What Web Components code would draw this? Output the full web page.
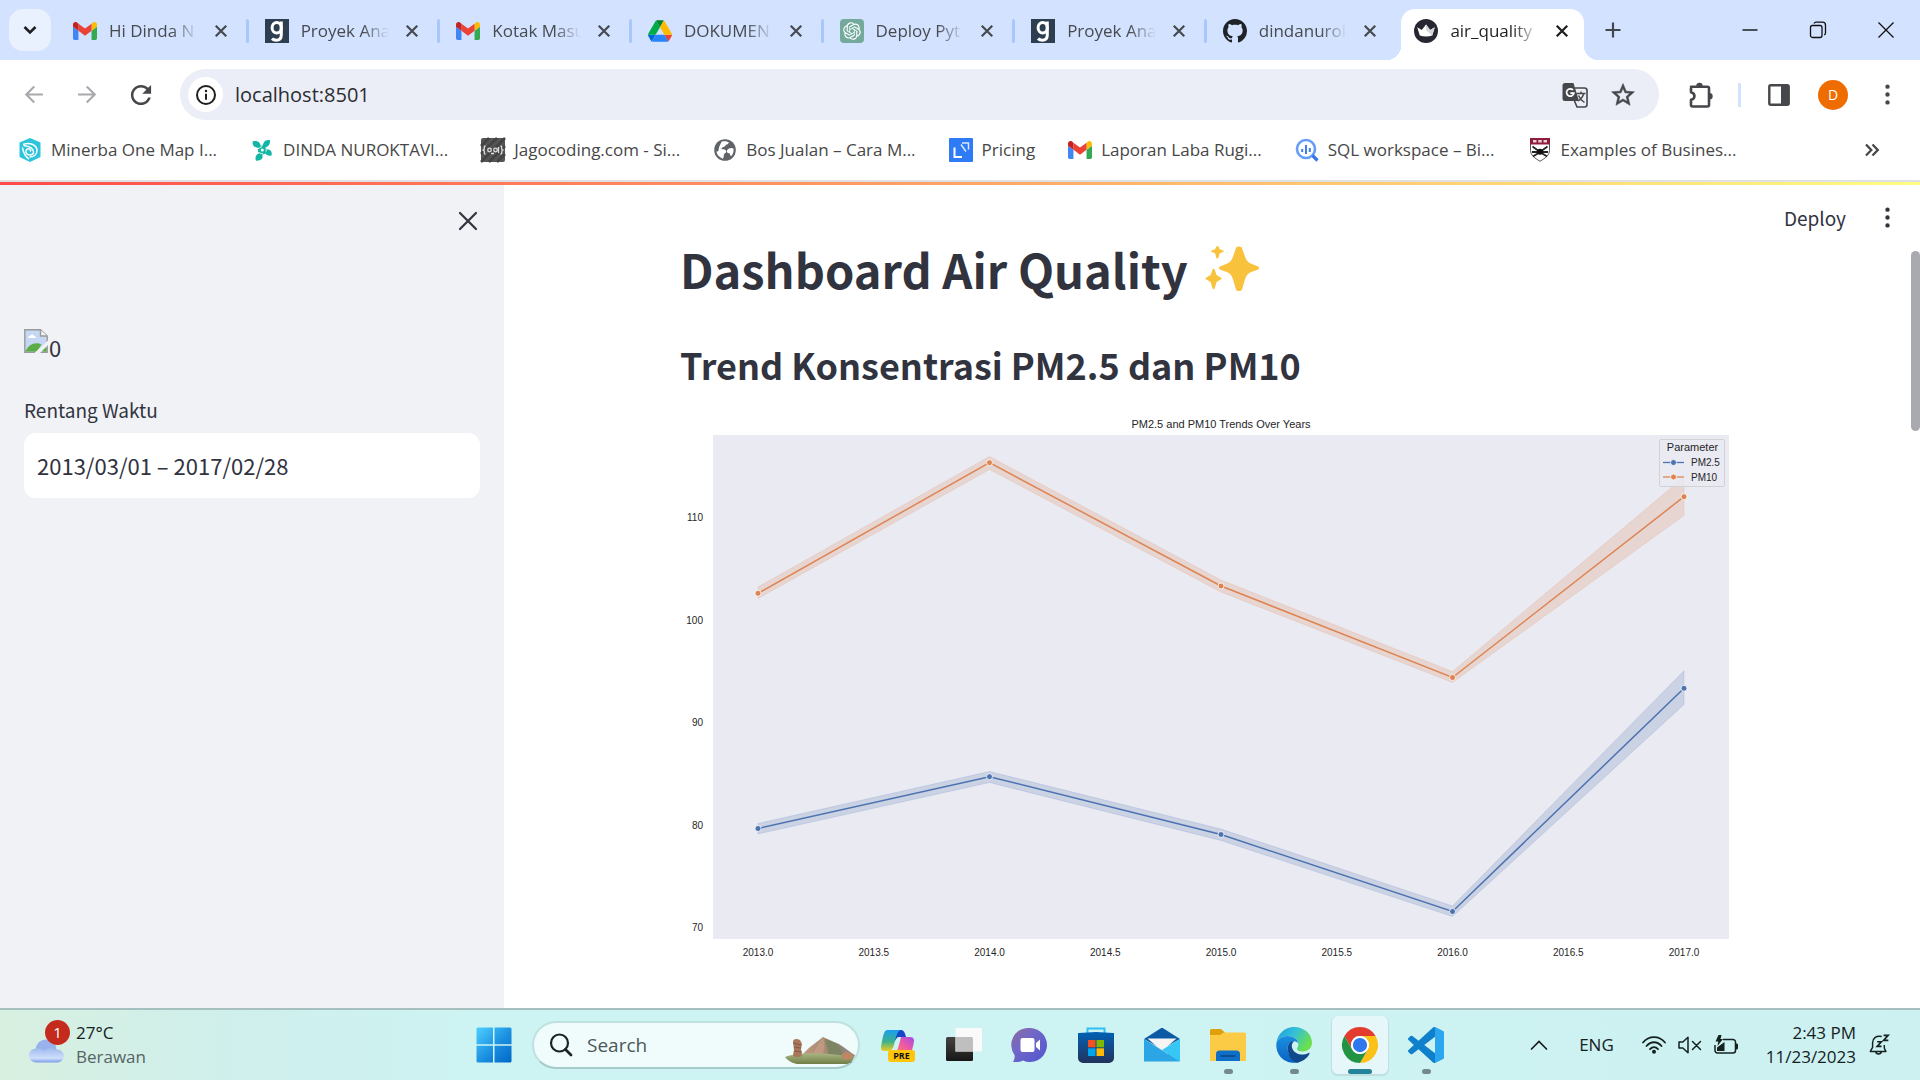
<!DOCTYPE html>
<html lang="en">
<head>
<meta charset="utf-8">
<title>air_quality</title>
<style>
  html, body { height: 100%; margin: 0; }
  body {
    --ui: "Open Sans", "Noto Sans", sans-serif;
    --app: "Noto Sans CJK SC", "Noto Sans", sans-serif;
    --ink: #31333f;
    font-family: var(--ui);
    display: flex; flex-direction: column; overflow: hidden; background: #fff;
  }
</style>
</head>
<body>
<tab-strip>
  <browser-tab icon="gmail">Hi Dinda N</browser-tab>
  <browser-tab icon="dicoding">Proyek Ana</browser-tab>
  <browser-tab icon="gmail">Kotak Masu</browser-tab>
  <browser-tab icon="drive">DOKUMEN</browser-tab>
  <browser-tab icon="openai">Deploy Pyt</browser-tab>
  <browser-tab icon="dicoding">Proyek Ana</browser-tab>
  <browser-tab icon="github" plain>dindanurol</browser-tab>
  <browser-tab icon="crown" active>air_quality</browser-tab>
</tab-strip>
<browser-toolbar></browser-toolbar>
<bookmark-bar>
  <bookmark-link icon="minerba">Minerba One Map I...</bookmark-link>
  <bookmark-link icon="pinwheel">DINDA NUROKTAVI...</bookmark-link>
  <bookmark-link icon="jago">Jagocoding.com - Si...</bookmark-link>
  <bookmark-link icon="globe">Bos Jualan – Cara M...</bookmark-link>
  <bookmark-link icon="pricing">Pricing</bookmark-link>
  <bookmark-link icon="gmail">Laporan Laba Rugi...</bookmark-link>
  <bookmark-link icon="bigquery">SQL workspace – Bi...</bookmark-link>
  <bookmark-link icon="shield">Examples of Busines...</bookmark-link>
</bookmark-bar>
<dashboard-app></dashboard-app>
<task-bar></task-bar>

<script>
const ICONS = {
  gmail: ['52 36 88 78', '<path fill="#4285f4" d="M58 108h14V74L52 59v43c0 3.32 2.69 6 6 6"/><path fill="#34a853" d="M120 108h14c3.32 0 6-2.69 6-6V59l-20 15"/><path fill="#fbbc04" d="M120 48v26l20-15v-8c0-7.42-8.47-11.65-14.4-7.2"/><path fill="#ea4335" d="M72 74V48l24 18 24-18v26L96 92"/><path fill="#c5221f" d="M52 51v8l20 15V48l-5.6-4.2c-5.94-4.45-14.4-.22-14.4 7.2"/>'],
  dicoding: ['0 0 24 24', '<path fill="#2d3e50" d="M0 0h24v24H0z"/><g fill="none" stroke="#fff" stroke-width="3"><ellipse cx="11.700" cy="8.800" rx="4.600" ry="5.300"/><path d="M16.300 2.500v13.500c0 3.600-1.900 5.200-5 5.200-1.700 0-3.200-.5-4.300-1.600"/></g>'],
  drive: ['0 -3 87.3 84', '<path d="m6.6 66.85 3.85 6.65c.8 1.4 1.95 2.5 3.3 3.3l13.75-23.8h-27.5c0 1.55.4 3.1 1.2 4.5z" fill="#0066da"/><path d="m43.65 25-13.75-23.8c-1.35.8-2.5 1.9-3.3 3.3l-25.4 44a9.06 9.06 0 0 0-1.2 4.500h27.500z" fill="#00ac47"/><path d="m73.55 76.8c1.35-.8 2.5-1.9 3.3-3.3l1.6-2.75 7.65-13.25c.8-1.4 1.2-2.95 1.2-4.5h-27.502l5.852 11.5z" fill="#ea4335"/><path d="m43.65 25 13.75-23.8c-1.35-.8-2.9-1.2-4.5-1.2h-18.5c-1.6 0-3.15.45-4.5 1.2z" fill="#00832d"/><path d="m59.8 53h-32.300l-13.750 23.800c1.350.8 2.900 1.200 4.500 1.200h50.800c1.600 0 3.150-.45 4.500-1.200z" fill="#2684fc"/><path d="m73.4 26.500-12.700-22c-.8-1.400-1.950-2.500-3.300-3.300l-13.750 23.800 16.150 28h27.450c0-1.550-.4-3.100-1.200-4.500z" fill="#ffba00"/>'],
  openai: ['0 0 36 36', '<rect width="36" height="36" rx="6" fill="#74aa9c"/><g transform="translate(4.800 4.800) scale(1.100)"><path fill="#fff" d="M22.2819 9.8211a5.9847 5.9847 0 0 0-.5157-4.9108 6.0462 6.0462 0 0 0-6.5098-2.9A6.0651 6.0651 0 0 0 4.9807 4.1818a5.9847 5.9847 0 0 0-3.9977 2.9 6.0462 6.0462 0 0 0 .7427 7.0966 5.98 5.98 0 0 0 .511 4.9107 6.051 6.051 0 0 0 6.5146 2.9001A5.9847 5.9847 0 0 0 13.2599 24a6.0557 6.0557 0 0 0 5.7718-4.2058 5.9894 5.9894 0 0 0 3.9977-2.9001 6.0557 6.0557 0 0 0-.7475-7.0729zm-9.022 12.6081a4.4755 4.4755 0 0 1-2.8764-1.0408l.1419-.0804 4.7783-2.7582a.7948.7948 0 0 0 .3927-.6813v-6.7369l2.02 1.1686a.071.071 0 0 1 .038.052v5.5826a4.504 4.504 0 0 1-4.4945 4.4944zm-9.6607-4.1254a4.4708 4.4708 0 0 1-.5346-3.0137l.142.0852 4.783 2.7582a.7712.7712 0 0 0 .7806 0l5.8428-3.3685v2.3324a.0804.0804 0 0 1-.0332.0615L9.74 19.9502a4.4992 4.4992 0 0 1-6.1408-1.6464zM2.3408 7.8956a4.485 4.485 0 0 1 2.3655-1.9728V11.6a.7664.7664 0 0 0 .3879.6765l5.8144 3.3543-2.0201 1.1685a.0757.0757 0 0 1-.071 0l-4.8303-2.7865A4.504 4.504 0 0 1 2.3408 7.872zm16.5963 3.8558L13.1038 8.364 15.1192 7.2a.0757.0757 0 0 1 .071 0l4.8303 2.7913a4.4944 4.4944 0 0 1-.6765 8.1042v-5.6772a.79.79 0 0 0-.407-.667zm2.0107-3.0231l-.142-.0852-4.7735-2.7818a.7759.7759 0 0 0-.7854 0L9.409 9.2297V6.8974a.0662.0662 0 0 1 .0284-.0615l4.8303-2.7866a4.4992 4.4992 0 0 1 6.6802 4.66zM8.3065 12.863l-2.02-1.1638a.0804.0804 0 0 1-.038-.0567V6.0742a4.4992 4.4992 0 0 1 7.3757-3.4537l-.142.0805L8.704 5.459a.7948.7948 0 0 0-.3927.6813zm1.0976-2.3654l2.602-1.4998 2.6069 1.4998v2.9994l-2.5974 1.4997-2.6067-1.4997Z"/></g>'],
  github: ['0 0 16 16', '<path fill="#1f2328" d="M8 0C3.58 0 0 3.58 0 8c0 3.54 2.29 6.53 5.47 7.59.4.07.55-.17.55-.38 0-.19-.01-.82-.01-1.49-2.01.37-2.53-.49-2.69-.94-.09-.23-.48-.94-.82-1.13-.28-.15-.68-.52-.01-.53.63-.01 1.08.58 1.23.82.72 1.21 1.87.87 2.33.66.07-.52.28-.87.51-1.07-1.78-.2-3.64-.89-3.64-3.95 0-.87.31-1.59.82-2.15-.08-.2-.36-1.02.08-2.12 0 0 .67-.21 2.2.82.64-.18 1.32-.27 2-.27s1.36.09 2 .27c1.53-1.04 2.2-.82 2.2-.82.44 1.1.16 1.92.08 2.12.51.56.82 1.27.82 2.15 0 3.07-1.87 3.75-3.65 3.95.29.25.54.73.54 1.48 0 1.07-.01 1.93-.01 2.2 0 .21.15.46.55.38A8.01 8.01 0 0 0 16 8c0-4.42-3.58-8-8-8z"/>'],
  crown: ['0 0 24 24', '<circle cx="12" cy="12" r="12" fill="#262730"/><path fill="#fff" d="M3.200 8.200l4.600 2.800L12 5.500l4.200 5.500 4.600-2.800-2.600 8.200c-3.800 1.300-8.600 1.300-12.400 0z"/><path fill="#d5d6da" d="M12 5.500l4.200 5.500 4.600-2.800-2.600 8.200L12 11z"/>'],
  close: ['0 0 24 24', '<path d="M5 5l14 14M19 5L5 19" stroke="currentColor" stroke-width="3" fill="none"/>'],
  thinClose: ['0 0 24 24', '<path d="M4 4l16 16M20 4L4 20" stroke="currentColor" stroke-width="2.200" stroke-linecap="round" fill="none"/>'],
  winClose: ['0 0 18 18', '<path d="M1.500 1.500l15 15M16.500 1.500l-15 15" stroke="#111" stroke-width="1.300" fill="none"/>'],
  winMin: ['0 0 18 18', '<path d="M1.500 9h15" stroke="#111" stroke-width="1.400"/>'],
  winMax: ['0 0 18 18', '<rect x="1.500" y="4.500" width="11.500" height="12" rx="2" fill="none" stroke="#111" stroke-width="1.300"/><path d="M5 2.500C5.500 1.500 6 1.200 7 1.200h6.500a3 3 0 0 1 3 3V12c0 1-.4 1.600-1.300 2" fill="none" stroke="#111" stroke-width="1.300"/>'],
  plus: ['0 0 18 18', '<path d="M9 1.500v15M1.500 9h15" stroke="#41474d" stroke-width="2.200"/>'],
  chevronDown: ['0 0 16 16', '<path d="M2.500 5l5.500 5.500L13.500 5" fill="none" stroke="#1f1f1f" stroke-width="2.600"/>'],
  chevronUp: ['0 0 18 18', '<path d="M1.500 13L9 5.500l7.500 7.500" fill="none" stroke="#1b1b1b" stroke-width="1.700" stroke-linecap="round"/>'],
  back: ['2 2 20 20', '<path fill="#a8a9ac" d="M21 11H7.500l5.900-5.900L12 3.700 3.700 12l8.300 8.300 1.400-1.400L7.500 13H21z"/>'],
  forward: ['2 2 20 20', '<path fill="#a8a9ac" d="M3 11h13.500l-5.900-5.900L12 3.700l8.300 8.300-8.300 8.300-1.400-1.400 5.900-5.900H3z"/>'],
  reload: ['2.500 2.500 19 19', '<path fill="#45474a" d="M17.65 6.35C16.2 4.900 14.210 4 12 4c-4.420 0-7.990 3.580-7.990 8s3.570 8 7.990 8c3.730 0 6.840-2.550 7.730-6h-2.080c-.82 2.330-3.040 4-5.650 4-3.310 0-6-2.690-6-6s2.690-6 6-6c1.660 0 3.140.69 4.220 1.780L13 11h7V4l-2.350 2.350z"/>'],
  info: ['0 0 22 22', '<circle cx="11" cy="11" r="9" fill="none" stroke="#1f1f1f" stroke-width="2"/><path d="M11 9.800v6" stroke="#1f1f1f" stroke-width="2"/><circle cx="11" cy="6.900" r="1.250" fill="#1f1f1f"/>'],
  translate: ['0 0 26 26', '<path fill="#45474a" d="M3 1h8.500l5.500 18H3a2.500 2.500 0 0 1-2.500-2.500v-13A2.500 2.500 0 0 1 3 1z"/><path d="M13 6h9.500A2.500 2.500 0 0 1 25 8.500v14a2.500 2.500 0 0 1-2.500 2.500h-7.500l-2.500-6" fill="none" stroke="#45474a" stroke-width="1.600"/><path d="M11 8a3.700 3.700 0 1 0 .9 3.200H8.300" fill="none" stroke="#fff" stroke-width="1.700"/><path d="M14.500 11.500h9M19 9.500v2M21.800 11.500c-.8 3.200-3.300 6-6 7.500M16.500 13.500c1 2.500 3.500 5.500 6 7" fill="none" stroke="#45474a" stroke-width="1.400"/>'],
  star: ['1.500 1.500 21 21', '<path fill="#45474a" stroke="#45474a" stroke-width=".5" d="M22 9.240l-7.190-.62L12 2 9.190 8.630 2 9.240l5.460 4.730L5.820 21 12 17.270 18.180 21l-1.630-7.030L22 9.240zM12 15.400l-3.760 2.270 1-4.280-3.320-2.880 4.380-.38L12 6.100l1.710 4.040 4.380.38-3.320 2.880 1 4.280L12 15.400z"/>'],
  extension: ['0 0 26 26', '<path d="M4 4.800h16.500a1.500 1.500 0 0 1 1.500 1.500V23a1.500 1.500 0 0 1-1.500 1.500h-15A1.500 1.500 0 0 1 4 23v-5.200c4.600-.9 4.600-6.600 0-7.600V6.300A1.500 1.500 0 0 1 5.500 4.800z" fill="none" stroke="#45474a" stroke-width="2.600" stroke-linejoin="round"/><path fill="#45474a" d="M9.300 4a3.200 3.200 0 0 1 6.400 0zM22.500 11a3.200 3.200 0 0 1 0 6.400z"/>'],
  panel: ['0 0 22 22', '<rect x="1.300" y="1.300" width="19.400" height="19.400" rx="1.500" fill="none" stroke="#45474a" stroke-width="2.400"/><path fill="#45474a" d="M13 1h8v20h-8z"/>'],
  kebab: ['0 0 24 24', '<g fill="currentColor"><circle cx="12" cy="3" r="2.500"/><circle cx="12" cy="12" r="2.500"/><circle cx="12" cy="21" r="2.500"/></g>'],
  more: ['0 0 16 16', '<path d="M2 2.500L7.300 8 2 13.500M8.500 2.500L13.800 8l-5.300 5.500" fill="none" stroke="#45474a" stroke-width="2.300"/>'],
  minerba: ['0 0 24 24', '<path fill="#2cc5dc" d="M12 0l10.500 4.500v14.500L12 24 1.500 19V4.500z"/><g fill="none" stroke="#fff" stroke-width="1.500"><path d="M5 6.500c7-2.500 14 .5 14 6 0 4-3 6.500-7.500 6.500"/><path d="M4.500 9.500C5 15 8.500 19.500 11 21"/><path d="M5.500 7.500c7 1 10 3.500 10 6.500 0 2-2 3-4 3-3 0-4.800-3-3-5.300 2-2.200 5 0 3.800 2"/></g>'],
  pinwheel: ['0 0 24 24', '<g fill="#12b5a6"><path d="M10.500 10C4 10.500 1.500 6 3 3.200 8 2 11.500 5 10.500 10z"/><path d="M13 9.800C12 4 16 1 20 2.200c.5 4.500-2.500 7.500-7 7.600z"/><path d="M15 12c5-1.500 7.500 1.500 6.500 5.500-4 .8-7-1-6.500-5.500z"/><path d="M11 15c3.500 3.500 1.500 8-5 7.800-1.500-4 .5-7.500 5-7.800z"/><circle cx="12.300" cy="12" r="4.500"/></g><circle cx="12.300" cy="12" r="1.500" fill="#fff"/><path d="M8 10.500c1.500.2 1.900-1.500 4-1.900M16 9.500c-.2 1.500.6 2.500 0 4M8.600 14c1 1.500 2.500 1.500 4.200 1.600" stroke="#fff" stroke-width="1" fill="none"/>'],
  jago: ['0 0 24 24', '<rect width="24" height="24" rx="2" fill="#555"/><path d="M0 8L8 0M0 16L16 0M0 24L24 0M8 24L24 8M16 24l8-8" stroke="#444" stroke-width="2.500"/><g fill="none" stroke="#ddd" stroke-width="1.300"><path d="M4.500 8C3 8 3.300 9.500 3.300 10.800S2.500 12 1.500 12c1 0 1.800 0 1.800 1.200S3 16 4.500 16M19.500 8c1.500 0 1.200 1.500 1.200 2.800s.8 1.200 1.800 1.200c-1 0-1.800 0-1.800 1.200s.3 2.800-1.200 2.800"/><circle cx="8.500" cy="12" r="1.800"/><circle cx="14.500" cy="12" r="1.800"/><path d="M10 15.500h3M17.500 9v6"/></g>'],
  globe: ['0 0 24 24', '<circle cx="12" cy="12" r="10.800" fill="#5f6368"/><path fill="#fff" d="M8.500 3.800c2.500-.8 5.500-.5 7.500.7-1 1.300-1.700 2.300-3.200 2.300-.3 2-2 2-3.300 2.500-.3 1.200-1.300 1.700-2 1.700 3 .3 5.500.2 5.800 2.500.2 1.300-1.800 1.700-2.300 2.800-.4 1.500-.2 3.500-1 4.500C6.500 19.500 4 17 3.400 13.500c1.600.3 2.100-.8 2.300-2.300C6 9 7 7 8.500 3.800zM16 10.500c1.500-.8 3-.8 4.500 0 .5 3-.5 6-2.500 7.800-1-.8-.8-2-1.500-3-2 .2-2.800-1-2.500-2.500.2-1 1-1.800 2-2.300z"/>'],
  pricing: ['0 0 24 24', '<rect width="24" height="24" rx="1" fill="#2f7bf6"/><path d="M5.500 9.500v9.500h7.500" fill="none" stroke="#fff" stroke-width="2"/><path d="M13 5h6.500v6.500M12 6.500l5 7" fill="none" stroke="#dbe8ff" stroke-width="1.500"/>'],
  bigquery: ['0 0 24 24', '<circle cx="11" cy="11" r="9" fill="#fff" stroke="#669df6" stroke-width="2.600"/><path d="M17.500 17.500l5 5" stroke="#3a76e8" stroke-width="3.200"/><path d="M7.200 11v3M11 7v9M14.800 10v4" stroke="#3f7de8" stroke-width="2"/>'],
  shield: ['0 0 24 24', '<path d="M2.500.8h19v11.500c0 5-4.500 8-9.500 11-5-3-9.500-6-9.500-11z" fill="#fff" stroke="#555" stroke-width="1"/><path fill="#8c1d3c" d="M2 0h20v6.500H2z"/><path d="M5 3.200h3.500M10.300 3.200h3.500M15.500 3.200H19" stroke="#e8ccd3" stroke-width="2.400"/><path d="M4.500 8.500L12 14l7.500-5.500M5 18.500l7-4.500 7 4.500M4 14h16" fill="none" stroke="#222" stroke-width="1.800"/><circle cx="12" cy="13.800" r="3" fill="#111"/>'],
  broken: ['0 0 24 24', '<path d="M.8.800h15.700L23.200 7v16.200H.8z" fill="#c5d7f3" stroke="#9a9a9a" stroke-width="1.400"/><path d="M16.500.8V7h6.700" fill="#f2f2f2" stroke="#9a9a9a" stroke-width="1.400"/><path d="M4 9c0-1.500 1.300-2 2-2 .5-2 3.500-2 4 0 1.500 0 2 1 2 2z" fill="#fff"/><path d="M1.500 22.500c3-7.500 10-10 16-7L13 22.500z" fill="#5aac44"/><path d="M18 22.500c1-2.500 2.500-4 4.500-4.500v4.500z" fill="#5aac44"/><path d="M10.500 24L24 11.500V16l-8 8z" fill="#f0f2f6"/>'],
  sparkles: ['0 0 54 46', '<g fill="#f9c23c"><path d="M31 2c.8-2 5.200-2 6 0l3.300 9.500c1 3 3 5.200 6 6.300l6.200 2.400c2 .8 2 2.800 0 3.500l-6.200 2.400c-3 1.200-5 3.300-6 6.300L37 43.500c-.8 2-5.200 2-6 0l-3.300-11.100c-1-3-3-5.100-6-6.300l-6.200-2.400c-2-.7-2-2.700 0-3.500l6.200-2.400c3-1.100 5-3.300 6-6.300z"/><path d="M11.400.6c.4-.8 1.600-.8 2 0l1.300 2.700 3.300 1.200c1 .4 1 1.200 0 1.600L14.700 7.300 13.400 12c-.4.800-1.600.8-2 0l-1.300-4.700L6.800 6.100c-1-.4-1-1.200 0-1.600l3.300-1.200z"/><path d="M7.600 23.500c.4-1 1.600-1 2 0l2 5.500 4.400 2.700c.9.600.9 1.200 0 1.600L11.600 36l-2 6.500c-.4 1-1.600 1-2 0l-2-6.500L1 33.300c-.9-.4-.9-1 0-1.600L5.600 29z"/></g>'],
  cloud: ['0 0 36 24', '<defs><linearGradient id="c" x1="0" y1="0" x2="0" y2="1"><stop stop-color="#9db9ee"/><stop offset=".7" stop-color="#cfdffb"/><stop offset="1" stop-color="#7d9be6"/></linearGradient></defs><circle cx="17" cy="11" r="10.500" fill="#98b3ec"/><path d="M7 9.500c3-.5 6 .5 8 2.500 3-3.500 8-4 12-1.500h1.500a6.500 6.500 0 0 1 0 13H7a7 7 0 0 1 0-14z" fill="url(#c)"/>'],
  windows: ['0 0 36 36', '<defs><linearGradient id="w" x1="0" y1="0" x2="1" y2="1"><stop stop-color="#4fd0ff"/><stop offset=".55" stop-color="#1a8fe0"/><stop offset="1" stop-color="#0067c8"/></linearGradient></defs><path fill="url(#w)" d="M1.500.5H17v16.700H.5V1.500zM18.500.5h16l1 1v15.700H18.500zM.5 18.800H17v16.700H1.500l-1-1zM18.500 18.800h17v15.700l-1 1h-16z"/>'],
  search: ['0 0 24 24', '<circle cx="10.500" cy="10" r="8.500" fill="none" stroke="#1d2323" stroke-width="2.200"/><path d="M16.500 16.500l5.500 5.500" stroke="#1d2323" stroke-width="2.800" stroke-linecap="round"/>'],
  landscape: ['0 0 72 30', '<defs><linearGradient id="h" x1="0" x2="1"><stop stop-color="#c89a86"/><stop offset=".5" stop-color="#a58a70"/><stop offset=".6" stop-color="#7b8462"/><stop offset="1" stop-color="#a58693"/></linearGradient><linearGradient id="g" x1="0" y1="0" x2="0" y2="1"><stop stop-color="#a9b685"/><stop offset="1" stop-color="#717f45"/></linearGradient></defs><path fill="url(#h)" d="M13 24c5-5 10-11 16-15L38 2l11 5c7 2 14 9 21 13l-4 8H16z"/><path fill="#7d8464" d="M40 4c1 7 5 14 3 20l18-2C55 15 52 9 47 7z"/><path fill="#cfa58c" d="M38 2c-5 6-8 14-12 21l11-1c3-7 3-14 1-20z" opacity=".5"/><path fill="url(#g)" d="M0 22c14-5 40-5 67 0l3-2c-2 5-5 8-8 9H12C7 28 2 25 0 22z"/><path fill="#a9765c" d="M8 7c0-3 3-4 7-2l2 4-1 5 1 6c-1 3-8 3-9 0l1-5z"/><path d="M8 8l8 2M9 12l7 1M9 16l8 1" stroke="#85594a" stroke-width="1"/><ellipse cx="62" cy="21" rx="5.500" ry="4" fill="#bb8765"/>'],
  copilot: ['0 0 36 36', '<defs><linearGradient id="a" x1="0" y1="0" x2="0" y2="1"><stop stop-color="#1b9df0"/><stop offset=".55" stop-color="#3bb28c"/><stop offset="1" stop-color="#f0cd20"/></linearGradient><linearGradient id="b" x1="1" y1="0" x2="0" y2="1"><stop stop-color="#a04be8"/><stop offset=".5" stop-color="#f25aa0"/><stop offset="1" stop-color="#ff8a4c"/></linearGradient></defs><path fill="#1546c8" d="M14 3h7c3 0 4 3 5 7h-7c-2 0-3 2-4 4z"/><path fill="url(#a)" d="M8 3h12c-3 2-4 7-6 15-1 4-3 6-6 6H4c-3 0-3.500-3-2.700-6C3 11 3 3 8 3z"/><path fill="url(#b)" d="M21 10h9c4 0 4.500 3 3.700 6-1 5-2 11-6 11H13c4-1 5-5 8-17z"/>'],
  taskview: ['0 0 36 36', '<defs><linearGradient id="t" x1="0" y1="0" x2="0" y2="1"><stop stop-color="#454341"/><stop offset="1" stop-color="#171717"/></linearGradient></defs><rect x="0" y="10" width="27" height="24" rx="1.500" fill="url(#t)"/><path fill="#fafafa" d="M9.500 1h25.500a1 1 0 0 1 1 1v22.500H9.500z"/><path fill="#bfbfbf" d="M9.500 10h16a1.500 1.500 0 0 1 1.500 1.500v13H9.500z"/>'],
  chat: ['0 0 36 36', '<defs><linearGradient id="v" x1="0" y1="0" x2="1" y2="1"><stop stop-color="#8f6a9e"/><stop offset=".4" stop-color="#7068c8"/><stop offset="1" stop-color="#5254d0"/></linearGradient></defs><path fill="url(#v)" d="M18 1a17 17 0 1 1-7 32.500c-3 1.500-6.500 1.800-10 1.400 1.500-2.500 2-5 1.500-7A17 17 0 0 1 18 1z"/><rect x="8.500" y="11" width="14" height="14" rx="2" fill="#fff"/><path fill="#fff" d="M24 16l4-3.500v11L24 20z"/>'],
  store: ['0 0 36 36', '<defs><linearGradient id="s" x1="0" y1="0" x2="0" y2="1"><stop stop-color="#0062b4"/><stop offset="1" stop-color="#22335c"/></linearGradient></defs><path d="M9.500 8V1.500h17V8" fill="none" stroke="#2fc0f5" stroke-width="2"/><path fill="url(#s)" d="M0 6h1l17-1 17 1h1v25a5 5 0 0 1-5 5H5a5 5 0 0 1-5-5z"/><path fill="#f25022" d="M10 13h7.500v7.300H10z"/><path fill="#7fba00" d="M18.500 13H26v7.300h-7.500z"/><path fill="#00a4ef" d="M10 21.300h7.500V29H10z"/><path fill="#ffb900" d="M18.500 21.300H26V29h-7.500z"/>'],
  mail: ['0 0 36 36', '<path fill="#0c59a4" d="M0 12L16.500 1.500c1-.6 2-.6 3 0L36 12 18 22z"/><path fill="#f5f5f5" d="M3.500 11.500h29L18 24z"/><path fill="#38c6f4" d="M36 12v22H18z"/><path fill="#2ba5e4" d="M0 12l36 22.500H0z"/><path fill="#38c6f4" d="M36 12L18 23l18 11.500z"/>'],
  explorer: ['0 0 36 36', '<path fill="#e0a00b" d="M0 3.500A1.500 1.500 0 0 1 1.500 2H11l4 3.500-4 3.500H0z"/><path fill="#fccb45" d="M0 8h10l4-2.500h20.500A1.500 1.500 0 0 1 36 7v27H0z"/><path fill="#0f6fc6" d="M6 34V27a3.500 3.500 0 0 1 3.500-3.500h17A3.500 3.500 0 0 1 30 27v7z"/><path d="M10.500 29h15" stroke="#0b4c90" stroke-width="1.800"/>'],
  edge: ['0 0 36 36', '<defs><linearGradient id="e1" x1="0" y1="0" x2="1" y2=".5"><stop stop-color="#1e9be0"/><stop offset=".5" stop-color="#34c0d8"/><stop offset="1" stop-color="#6be04c"/></linearGradient><linearGradient id="e2" x1="0" y1="0" x2="0" y2="1"><stop stop-color="#1a8fe0"/><stop offset="1" stop-color="#0a62c4"/></linearGradient></defs><path fill="url(#e1)" d="M.5 15.500C1.800 6.500 9 0 18 0c10 0 18 7 18 15.500C36 21 32 24.500 27 24.500c-4 0-6-1.500-6-2.800 0-1 1.300-1.600 1.300-4.500C22.300 12 17 9 11.500 9 6 9 2 12 .5 15.500z"/><path fill="url(#e2)" d="M.5 15.500C2 12 6 9 11.500 9c5.500 0 10 3 10.700 7-5-4.500-11 0-10.500 6C12 29 17 34.500 23 35.200 20 36.300 8 37 2.500 27 .3 23 0 19 .5 15.500z"/><path fill="#114a8b" d="M11.700 22c-.2-4.500 2.500-8 6.500-8-2.500 2-3.200 5-1.700 8 2.500 5.500 10 7 16 4 .8-.4 1.300.2.900.9-2.600 4.500-7 7.800-12.400 8.600C15 34.500 12 28 11.700 22z"/>'],
  chrome: ['0 0 48 48', '<path fill="#e33b2e" d="M24 12h20.780A23.994 23.994 0 0 0 3.217 12.003L13.608 30A11.985 11.985 0 0 1 24 12z"/><path fill="#fbc116" d="M34.391 30.003L24 48A23.994 23.994 0 0 0 44.780 12H24a11.985 11.985 0 0 1 10.391 18.003z"/><path fill="#229342" d="M13.609 30.003L3.218 12.006A23.994 23.994 0 0 0 24.002 48l10.391-17.997a11.985 11.985 0 0 1-20.784 0z"/><circle cx="24" cy="24" r="12" fill="#fff"/><circle cx="24" cy="24" r="9.500" fill="#2f77ee"/>'],
  vscode: ['0 0 24 24', '<path fill="#0f80cc" d="M23.150 2.587L18.210.210a1.494 1.494 0 0 0-1.705.290l-9.460 8.630-4.120-3.128a.999.999 0 0 0-1.276.057L.327 7.261A1 1 0 0 0 .326 8.740L3.899 12 .326 15.260a1 1 0 0 0 .001 1.479L1.650 17.940a.999.999 0 0 0 1.276.057l4.120-3.128 9.460 8.630a1.492 1.492 0 0 0 1.704.290l4.942-2.377A1.500 1.500 0 0 0 24 20.060V3.939a1.500 1.500 0 0 0-.850-1.352zm-5.146 14.861L10.826 12l7.178-5.448v10.896z"/><path fill="#2ba7f0" d="M18.004.15l5.146 2.437A1.500 1.500 0 0 1 24 3.939V20.060a1.500 1.500 0 0 1-.850 1.352L18.004 23.850z"/>'],
  wifi: ['0 0 24 18', '<g fill="none" stroke="#15211f" stroke-width="1.800" stroke-linecap="round"><path d="M1 6.500C7-.6 17-.6 23 6.500M4.500 10c4.500-5 10.500-5 15 0M8 13.200c2.500-2.700 5.500-2.700 8 0"/></g><circle cx="12" cy="15.700" r="2" fill="#15211f"/>'],
  muted: ['0 0 24 18', '<path d="M1 6v6h3.800l5.200 4.800V1.200L4.800 6zM14.500 5.500l8 8M22.500 5.500l-8 8" fill="none" stroke="#15211f" stroke-width="1.500" stroke-linejoin="round" stroke-linecap="round"/>'],
  battery: ['0 0 24 20', '<path d="M9 4.500h10A2.500 2.500 0 0 1 21.500 7v8.500A2.500 2.500 0 0 1 19 18H3.500A2.500 2.500 0 0 1 1 15.500V10" fill="none" stroke="#15211f" stroke-width="1.500"/><path fill="#15211f" d="M22 8.500h1a1.500 1.500 0 0 1 1 1.500v3a1.500 1.500 0 0 1-1 1.500h-1zM4.500 0h3L6.500 4H9L3.500 11l.8-4.500H1.500zM10.500 7v9H3v-3.500z"/>'],
  bell: ['0 0 24 24', '<path d="M15 2.800C8.500 1.500 5 5 5 9.500v5L2.500 19h17l-1.700-3.500V12M8.500 19.500c.5 3 5.500 3 6 0" fill="none" stroke="#15211f" stroke-width="1.600" stroke-linejoin="round"/><path d="M10 8.500h4.500L10 13.500h4.800M17 1.500h5L17 7h5.200" fill="none" stroke="#15211f" stroke-width="1.800"/>']
};

/* Small helper: every component renders its styles and markup into an open root. */
class Base extends HTMLElement {
  connectedCallback() {
    if (this.shadowRoot) return;
    const t = document.createElement('template');
    t.innerHTML = `<style>:host,*{box-sizing:border-box}button{font:inherit;color:inherit;border:0;padding:0;background:none;display:grid;place-items:center}${this.css()}</style>${this.html()}`;
    this.attachShadow({ mode: 'open' }).append(t.content.cloneNode(true));
  }
}
const define = (name, css, html) => customElements.define(name, class extends Base {
  css() { return css; }
  html() { return typeof html === 'function' ? html(this) : html; }
});

define('ui-icon',
  ':host{display:block;flex:none;width:var(--size,24px);height:var(--size,24px)}svg{display:block;width:100%;height:100%;overflow:visible}',
  el => { const [box, body] = ICONS[el.getAttribute('name')]; return `<svg viewBox="${box}" aria-hidden="true">${body}</svg>`; });

define('tab-strip', `
  :host{display:flex;align-items:flex-start;height:60px;flex:none;background:#d3e2ff}
  .menu{width:42px;height:42px;margin:9px 5px 0 9px;border-radius:14px;background:#e9f0fe}
  .tabs{display:flex;flex:1;max-width:1533px}
  .new{width:42px;height:60px;margin-left:3px}
  .window{display:flex;margin-left:auto}
  .window button{width:68px;height:60px}`, `
  <button class="menu" aria-label="Search tabs"><ui-icon name="chevronDown" style="--size:16px"></ui-icon></button>
  <div class="tabs"><slot></slot></div>
  <button class="new" aria-label="New tab"><ui-icon name="plus" style="--size:18px"></ui-icon></button>
  <div class="window">
    <button aria-label="Minimise"><ui-icon name="winMin" style="--size:18px"></ui-icon></button>
    <button aria-label="Restore"><ui-icon name="winMax" style="--size:18px"></ui-icon></button>
    <button aria-label="Close"><ui-icon name="winClose" style="--size:18px"></ui-icon></button>
  </div>`);

define('browser-tab', `
  :host{display:flex;flex:1;min-width:0;height:60px;padding:9px 5px 0 4px;color:#474b50}
  .tab{display:flex;flex:1;min-width:0;align-items:center;gap:12px;padding:0 11px 8px 13px;position:relative}
  :host(:not([active])) .tab::after{content:"";position:absolute;right:-6px;top:10px;width:3px;height:24px;border-radius:2px;background:#a8c7fa}
  :host([plain]) .tab::after{display:none}
  :host([active]) .tab{background:#fff;border-radius:14px 14px 0 0;color:#1f1f1f}
  :host([active]) .tab::before,:host([active]) .tab::after{content:"";position:absolute;bottom:0;width:14px;height:14px}
  :host([active]) .tab::before{left:-14px;background:radial-gradient(circle at 0 0,transparent 14px,#fff 14px)}
  :host([active]) .tab::after{right:-14px;background:radial-gradient(circle at 100% 0,transparent 14px,#fff 14px)}
  .title{flex:1;min-width:0;overflow:hidden;white-space:nowrap;font-size:17px;line-height:26px;-webkit-mask:linear-gradient(90deg,#000 70%,transparent);mask:linear-gradient(90deg,#000 70%,transparent)}
  button{width:22px;height:26px}`,
  el => `<div class="tab"><ui-icon name="${el.getAttribute('icon')}"></ui-icon><span class="title"><slot></slot></span><button aria-label="Close tab"><ui-icon name="close" style="--size:18px"></ui-icon></button></div>`);

define('browser-toolbar', `
  :host{display:flex;align-items:center;flex:none;height:69px;padding:0 6px;background:#fff;color:#45474a}
  button{width:54px;height:50px}
  .omni{display:flex;align-items:center;flex:1;height:51px;margin-left:12px;padding:0 12px 0 8px;border-radius:26px;background:#ebeef7}
  .site{width:35px;height:35px;border-radius:50%;background:#fff}
  input{flex:1;min-width:0;border:0;outline:0;background:none;padding:0 0 0 12px;font:20px/28px var(--ui);color:#2b2d30}
  .omni .act{width:48px}
  .ext{width:54px;margin-left:14px}
  hr{width:3px;height:24px;border:0;margin:0 11px;background:#d3e2fd}
  .avatar{display:grid;place-items:center;width:30px;height:30px;border-radius:50%;background:#ef6c00;color:#fff;font-size:14px}`, `
  <button aria-label="Back"><ui-icon name="back" style="--size:21px"></ui-icon></button>
  <button aria-label="Forward"><ui-icon name="forward" style="--size:21px"></ui-icon></button>
  <button aria-label="Reload"><ui-icon name="reload" style="--size:24px"></ui-icon></button>
  <div class="omni">
    <button class="site" aria-label="Site information"><ui-icon name="info" style="--size:22px"></ui-icon></button>
    <input aria-label="Address" value="localhost:8501">
    <button class="act" aria-label="Translate"><ui-icon name="translate" style="--size:26px"></ui-icon></button>
    <button class="act" aria-label="Bookmark"><ui-icon name="star"></ui-icon></button>
  </div>
  <button class="ext" aria-label="Extensions"><ui-icon name="extension" style="--size:26px"></ui-icon></button>
  <hr>
  <button aria-label="Side panel"><ui-icon name="panel" style="--size:22px"></ui-icon></button>
  <button aria-label="Profile"><span class="avatar">D</span></button>
  <button aria-label="Menu"><ui-icon name="kebab" style="--size:21px"></ui-icon></button>`);

define('bookmark-bar', `
  :host{display:flex;align-items:center;flex:none;height:53px;padding:0 38px 10px 18px;background:#fff;border-bottom:2px solid #dfe0e3}
  nav{display:flex;gap:33px;flex:1;min-width:0}
  button{width:20px;height:41px}`, `
  <nav aria-label="Bookmarks"><slot></slot></nav>
  <button aria-label="More bookmarks"><ui-icon name="more" style="--size:16px"></ui-icon></button>`);

define('bookmark-link', `
  :host{display:block}
  a{display:flex;align-items:center;gap:9px;color:#474747;text-decoration:none;white-space:nowrap;font-size:17px;line-height:26px}`,
  el => `<a href="#"><ui-icon name="${el.getAttribute('icon')}"></ui-icon><span><slot></slot></span></a>`);

define('dashboard-app', `
  :host{display:flex;flex-direction:column;flex:1;min-height:0;font-family:var(--app);color:var(--ink);background:#fff}
  .rule{flex:none;height:3px;background:linear-gradient(90deg,#ff4b4b,#fffd80)}
  .row{display:flex;flex:1;min-height:0;position:relative}
  main{flex:1;min-width:0;overflow:hidden;padding:52px 24px 0}
  .block{max-width:1064px;margin:0 auto}
  h1,h2{margin:0;white-space:nowrap}
  h1{display:flex;align-items:center;gap:17px;font-size:47px;line-height:64px;font-weight:700}
  h1 ui-icon{width:54px;height:46px}
  h2{margin:38px 0 21px;font-size:36px;line-height:50px;font-weight:700}
  .tools{position:absolute;top:5px;right:6px;display:flex;align-items:center}
  .tools button{height:54px;min-width:32px;font-size:19px}
  .tools button+button{width:54px;margin-left:14px}
  .thumb{position:absolute;right:0;top:66px;width:9px;height:180px;border-radius:5px;background:#a9a9b0}`, `
  <div class="rule"></div>
  <div class="row">
    <side-panel></side-panel>
    <main><div class="block">
      <h1>Dashboard Air Quality <ui-icon name="sparkles"></ui-icon></h1>
      <h2>Trend Konsentrasi PM2.5 dan PM10</h2>
      <trend-chart></trend-chart>
    </div></main>
    <div class="tools"><button>Deploy</button><button aria-label="App menu"><ui-icon name="kebab" style="--size:21px"></ui-icon></button></div>
    <div class="thumb"></div>
  </div>`);

define('side-panel', `
  :host{display:flex;flex-direction:column;width:504px;flex:none;background:#f0f2f6;padding:18px 24px}
  .x{align-self:flex-end;width:36px;height:36px;margin-right:-6px}
  .logo{display:flex;align-items:flex-start;gap:1px;height:36px;margin:90px 0 31px;font-size:22px;line-height:36px}
  label{font-size:19px;line-height:28px;margin-bottom:9px}
  input{width:100%;height:65px;border:0;border-radius:12px;background:#fff;padding:0 13px 2px;font:22px/36px var(--app);color:var(--ink)}`, `
  <button class="x" aria-label="Close sidebar"><ui-icon name="thinClose" style="--size:24px"></ui-icon></button>
  <div class="logo"><ui-icon name="broken"></ui-icon><span>0</span></div>
  <label for="range">Rentang Waktu</label>
  <input id="range" value="2013/03/01 – 2017/02/28">`);

const SERIES = [
  { name: 'PM2.5', color: '#4c72b0', y: [418.5, 366.7, 424.5, 501.5, 278.3], hi: [413.5, 361.500, 419, 496, 260.700], lo: [424, 372.500, 430.500, 506.500, 294.500] },
  { name: 'PM10', color: '#dd8452', y: [183.300, 52.700, 176, 267.500, 86.700], hi: [177, 46.500, 170, 261.500, 67], lo: [188.500, 59.500, 182, 272.500, 105.500] }
];
define('trend-chart', `
  :host{display:block}
  svg{display:block;width:100%;overflow:visible;font:10px "Liberation Sans",Arial,sans-serif;fill:#262626}
  .big{font-size:11px}`, () => {
  const X = i => 78 + i * 231.5;
  const dot = (x, y, c) => `<circle cx="${x}" cy="${y}" r="3" fill="${c}" stroke="#fff" stroke-width=".8"/>`;
  let s = '<rect x="33" y="25" width="1016" height="504" fill="#eaeaf2"/>';
  s += '<text class="big" x="541" y="18" text-anchor="middle">PM2.5 and PM10 Trends Over Years</text>';
  [110, 100, 90, 80, 70].forEach((v, i) => { s += `<text x="23" y="${111 + Math.round(i * 102.600)}" text-anchor="end">${v}</text>`; });
  for (let i = 0; i < 9; i++) s += `<text x="${X(i / 2)}" y="546" text-anchor="middle">${(2013 + i / 2).toFixed(1)}</text>`;
  for (const d of SERIES) {
    const band = d.hi.map((y, i) => X(i) + ',' + y).concat(d.lo.map((y, i) => X(i) + ',' + y).reverse()).join(' ');
    s += `<polygon points="${band}" fill="${d.color}" fill-opacity=".2" stroke="${d.color}" stroke-opacity=".2" stroke-width=".8"/>`;
    s += `<polyline points="${d.y.map((y, i) => X(i) + ',' + y).join(' ')}" fill="none" stroke="${d.color}" stroke-width="1.500"/>`;
    s += d.y.map((y, i) => dot(X(i), y, d.color)).join('');
  }
  s += '<rect x="979.500" y="29.500" width="65" height="47" rx="1.500" fill="#eaeaf2" fill-opacity=".8" stroke="#ccc" stroke-opacity=".8"/><text class="big" x="1012.500" y="41" text-anchor="middle">Parameter</text>';
  SERIES.forEach((d, i) => {
    const y = 52.500 + i * 14.500;
    s += `<path d="M983 ${y}h21" stroke="${d.color}" stroke-width="1.300"/>${dot(993.500, y, d.color)}<text x="1011" y="${y + 3.500}">${d.name}</text>`;
  });
  return `<svg viewBox="0 0 1064 560" role="img" aria-label="PM2.5 and PM10 Trends Over Years">${s}</svg>`;
});

define('task-bar', `
  :host{display:grid;grid-template-columns:1fr auto 1fr;align-items:center;flex:none;height:72px;border-top:2px solid #a6bfbf;color:#15211f;
    background:linear-gradient(90deg,#d8f0e0 0,#cfefec 12%,#cdf3f2 24%,#cdf3f2 60%,#cdf1f1 100%)}
  .weather{display:flex;align-items:center;gap:11px;padding-left:29px;font-size:17px;line-height:24px;justify-self:start}
  .pic{position:relative;width:36px;height:44px;padding-top:16px}
  .pic ui-icon{width:36px;height:24px}
  .badge{position:absolute;left:16px;top:-3px;width:25px;height:25px;border-radius:50%;background:#c42b1c;color:#fff;font-size:15px;line-height:25px;text-align:center}
  .muted{color:#566464;display:block}
  .text{text-align:left}
  .apps{display:flex;align-items:center;gap:10px}
  .find{display:flex;align-items:center;width:328px;height:48px;padding:0 1px 0 15px;border-radius:24px;background:#f0fbfc;border:2px solid #bfe2e0;border-bottom-color:#a5cbca}
  .find input{flex:1;min-width:0;border:0;outline:0;background:none;padding:0 0 0 14px;font:19px/28px var(--ui);color:#4d5858}
  .find input::placeholder{color:#4d5858}
  .find .scene{width:72px;height:30px;margin-top:10px}
  .tray{display:flex;align-items:center;justify-self:end;padding-right:30px;font-size:17px;line-height:24px}
  .tray .up{width:40px;height:48px;margin-right:20px}
  .quick{display:flex;align-items:center;gap:12px;margin:0 28px}
  .clock{text-align:right;margin-right:12px}
  .quick ui-icon{height:20px}`, `
  <button class="weather"><span class="pic"><ui-icon name="cloud"></ui-icon><span class="badge">1</span></span><span class="text">27°C<span class="muted">Berawan</span></span></button>
  <div class="apps">
    <task-button icon="windows" label="Start"></task-button>
    <div class="find"><ui-icon name="search"></ui-icon><input aria-label="Search" placeholder="Search"><ui-icon class="scene" name="landscape"></ui-icon></div>
    <task-button icon="copilot" label="Copilot" tag="PRE"></task-button>
    <task-button icon="taskview" label="Task view"></task-button>
    <task-button icon="chat" label="Chat"></task-button>
    <task-button icon="store" label="Microsoft Store"></task-button>
    <task-button icon="mail" label="Mail"></task-button>
    <task-button icon="explorer" label="File Explorer" open></task-button>
    <task-button icon="edge" label="Edge" open></task-button>
    <task-button icon="chrome" label="Chrome" open active></task-button>
    <task-button icon="vscode" label="Visual Studio Code" open></task-button>
  </div>
  <div class="tray">
    <button class="up" aria-label="Hidden icons"><ui-icon name="chevronUp" style="--size:18px"></ui-icon></button>
    <span>ENG</span>
    <span class="quick"><ui-icon name="wifi"></ui-icon><ui-icon name="muted"></ui-icon><ui-icon name="battery"></ui-icon></span>
    <span class="clock">2:43 PM<br>11/23/2023</span>
    <ui-icon name="bell" style="--size:22px"></ui-icon>
  </div>`);

define('task-button', `
  :host{display:block}
  button{position:relative;width:56px;height:58px;border-radius:6px}
  :host([active]) button{background:#e6f7fa;box-shadow:0 1px 1px 1px #bfdfe0}
  :host([open]) button::after{content:"";position:absolute;left:50%;bottom:0;width:9px;height:5px;margin-left:-4px;border-radius:3px;background:#76898a}
  :host([active]) button::after{width:24px;margin-left:-12px;background:#23839a}
  b{position:absolute;left:18px;top:34px;width:27px;height:12px;border-radius:3px;background:#ffc40c;color:#111;font-size:9px;line-height:12px;text-align:center}`,
  el => `<button aria-label="${el.getAttribute('label')}"><ui-icon name="${el.getAttribute('icon')}" style="--size:36px"></ui-icon>${el.hasAttribute('tag') ? `<b>${el.getAttribute('tag')}</b>` : ''}</button>`);
</script>
</body>
</html>
